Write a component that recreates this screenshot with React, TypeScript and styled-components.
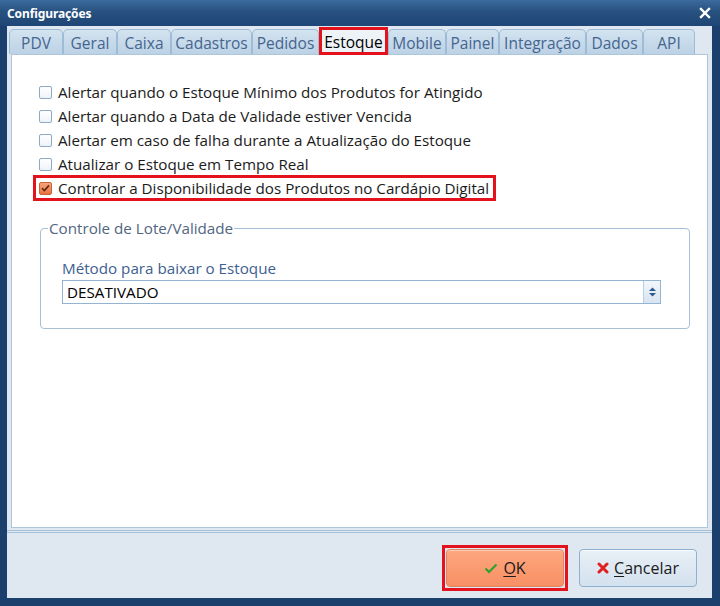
import React from 'react';
import styled, { createGlobalStyle, css } from 'styled-components';

const Global = createGlobalStyle`
  html, body { margin: 0; padding: 0; background: #1c406d; }
  body { font-family: "Open Sans", "Noto Sans", sans-serif; }
  * { box-sizing: border-box; }
`;

const RED = '#e3121c';

const Frame = styled.div`
  width: 720px;
  height: 606px;
  background: #1c406d;
  display: flex;
  flex-direction: column;
`;

const TitleBar = styled.div`
  height: 26px;
  flex: none;
  display: flex;
  align-items: center;
  justify-content: space-between;
  padding: 0 9px 0 7px;
  background: linear-gradient(to bottom, #3b6a9e 0%, #27517f 45%, #1f4676 100%);
  color: #fff;
  font-family: "Noto Sans", "Open Sans", sans-serif;
  font-weight: 700;
  font-size: 12px;
`;

const Title = styled.span`
  letter-spacing: -0.1px;
`;

const CloseBtn = styled.span`
  display: flex;
  width: 12px;
  height: 12px;
`;

const Client = styled.div`
  flex: 1;
  margin: 0 8px 8px 7px;
  background: #dfe8f1;
  display: flex;
  flex-direction: column;
`;

const TabRow = styled.div`
  height: 28px;
  flex: none;
  display: flex;
  align-items: flex-end;
  padding-left: 2px;
  position: relative;
  z-index: 1;
`;

const Tab = styled.div<{ $w: number; $active?: boolean }>`
  width: ${(p) => p.$w}px;
  height: 25px;
  display: flex;
  align-items: center;
  justify-content: center;
  padding-top: 1px;
  font-size: 15.5px;
  color: #45658f;
  border: 1px solid #9fbcd6;
  border-bottom: none;
  border-radius: 5px 5px 0 0;
  background: linear-gradient(to bottom, #d3e3f0 0%, #bcd2e5 100%);
  ${(p) =>
    p.$active &&
    css`
      height: 28px;
      margin-bottom: -1px;
      border: 3px solid ${RED};
      border-radius: 0;
      background: #eef3f8;
      color: #000;
    `}
`;

const Panel = styled.div`
  flex: 1;
  margin: 0 4px;
  background: #fff;
  border: 1px solid #adc6dc;
  display: flex;
  flex-direction: column;
`;

const CheckList = styled.div`
  margin: 27px 0 0 24px;
  display: flex;
  flex-direction: column;
  gap: 4px;
`;

const Row = styled.label<{ $hl?: boolean }>`
  width: fit-content;
  height: 20px;
  display: flex;
  align-items: center;
  gap: 6px;
  padding: 0 4px 0 3px;
  font-size: 15.2px;
  color: #1b1b1b;
  ${(p) =>
    p.$hl &&
    css`
      outline: 3px solid ${RED};
    `}
`;

const Box = styled.span<{ $checked?: boolean }>`
  width: 13px;
  height: 13px;
  flex: none;
  border: 1px solid #8ea9c3;
  border-radius: 2px;
  background: linear-gradient(to bottom, #ffffff, #eef3f8);
  display: flex;
  align-items: center;
  justify-content: center;
  ${(p) =>
    p.$checked &&
    css`
      border-color: #c2663c;
      background: linear-gradient(to bottom, #f7a57c 0%, #e9723e 100%);
    `}
`;

const Group = styled.fieldset`
  margin: 20px 17px 0 28px;
  padding: 0;
  border: 1px solid #a7c0d7;
  border-radius: 4px;
  min-width: 0;
`;

const Legend = styled.legend`
  margin-left: 7px;
  padding: 0 1px;
  font-size: 15.2px;
  line-height: 20px;
  color: #52667f;
`;

const GroupBody = styled.div`
  padding: 20px 28px 24px 21px;
  display: flex;
  flex-direction: column;
  gap: 2px;
`;

const FieldLabel = styled.div`
  font-size: 15.2px;
  line-height: 20px;
  color: #3d6090;
`;

const Select = styled.div`
  height: 24px;
  display: flex;
  border: 1px solid #93b4d3;
  background: #fff;
`;

const SelectText = styled.div`
  flex: 1;
  display: flex;
  align-items: center;
  padding-left: 4px;
  font-size: 15.2px;
  color: #000;
`;

const Spin = styled.div`
  width: 17px;
  flex: none;
  border-left: 1px solid #b9cfe3;
  background: linear-gradient(to bottom, #f3f7fb, #d7e4f0);
  display: flex;
  align-items: center;
  justify-content: center;
`;

const Footer = styled.div`
  height: 68px;
  flex: none;
  margin-top: 2px;
  border-top: 3px double #a8c2da;
  display: flex;
  justify-content: flex-end;
  align-items: flex-start;
  gap: 15px;
  padding: 16px 15px 0 0;
`;

const Button = styled.button<{ $primary?: boolean; $hl?: boolean }>`
  position: relative;
  width: 118px;
  height: 38px;
  display: flex;
  align-items: center;
  justify-content: center;
  gap: 5px;
  font-family: "Open Sans", "Noto Sans", sans-serif;
  font-size: 16px;
  color: #1a1a1a;
  border-radius: 4px;
  padding: 0;
  border: 1px solid #8fb0cf;
  background: linear-gradient(to bottom, #e9f0f7 0%, #d3e1ee 100%);
  box-shadow: inset 0 1px 0 rgba(255, 255, 255, 0.7);
  ${(p) =>
    p.$primary &&
    css`
      border-color: #d8876a;
      background: linear-gradient(to bottom, #fda780 0%, #f88f63 100%);
      box-shadow: inset 0 1px 0 rgba(255, 220, 200, 0.7);
    `}
  ${(p) =>
    p.$hl &&
    css`
      &::after {
        content: '';
        position: absolute;
        inset: -5px;
        border: 3px solid ${RED};
        pointer-events: none;
      }
    `}
`;

const U = styled.span`
  text-decoration: underline;
  text-underline-offset: 2px;
`;

const tabs: { label: string; w: number; active?: boolean }[] = [
  { label: 'PDV', w: 54 },
  { label: 'Geral', w: 54 },
  { label: 'Caixa', w: 54 },
  { label: 'Cadastros', w: 81 },
  { label: 'Pedidos', w: 67 },
  { label: 'Estoque', w: 69, active: true },
  { label: 'Mobile', w: 58 },
  { label: 'Painel', w: 53 },
  { label: 'Integração', w: 87 },
  { label: 'Dados', w: 57 },
  { label: 'API', w: 52 },
];

const options: { label: string; checked?: boolean }[] = [
  { label: 'Alertar quando o Estoque Mínimo dos Produtos for Atingido' },
  { label: 'Alertar quando a Data de Validade estiver Vencida' },
  { label: 'Alertar em caso de falha durante a Atualização do Estoque' },
  { label: 'Atualizar o Estoque em Tempo Real' },
  { label: 'Controlar a Disponibilidade dos Produtos no Cardápio Digital', checked: true },
];

export default function App() {
  return (
    <>
      <Global />
      <Frame>
        <TitleBar>
          <Title>Configurações</Title>
          <CloseBtn>
            <svg width="12" height="12" viewBox="0 0 12 12">
              <path d="M2 2 L10 10 M10 2 L2 10" stroke="#fff" strokeWidth="2.4" strokeLinecap="square" />
            </svg>
          </CloseBtn>
        </TitleBar>
        <Client>
          <TabRow>
            {tabs.map((t) => (
              <Tab key={t.label} $w={t.w} $active={t.active}>
                {t.label}
              </Tab>
            ))}
          </TabRow>
          <Panel>
            <CheckList>
              {options.map((o) => (
                <Row key={o.label} $hl={o.checked}>
                  <Box $checked={o.checked}>
                    {o.checked && (
                      <svg width="9" height="8" viewBox="0 0 9 8">
                        <path d="M1 4.2 L3.4 6.6 L8 1.4" fill="none" stroke="#5a2a14" strokeWidth="1.6" />
                      </svg>
                    )}
                  </Box>
                  {o.label}
                </Row>
              ))}
            </CheckList>
            <Group>
              <Legend>Controle de Lote/Validade</Legend>
              <GroupBody>
                <FieldLabel>Método para baixar o Estoque</FieldLabel>
                <Select>
                  <SelectText>DESATIVADO</SelectText>
                  <Spin>
                    <svg width="9" height="12" viewBox="0 0 9 12">
                      <path d="M4.5 1.5 L8 5 L1 5 Z" fill="#2f5a8c" />
                      <path d="M4.5 10.5 L8 7 L1 7 Z" fill="#2f5a8c" />
                    </svg>
                  </Spin>
                </Select>
              </GroupBody>
            </Group>
          </Panel>
          <Footer>
            <Button $primary $hl>
              <svg width="14" height="11" viewBox="0 0 14 11">
                <path d="M1.5 5.5 L5 9 L12.5 1.5" fill="none" stroke="#2ea12e" strokeWidth="2.2" />
              </svg>
              <span>
                <U>O</U>K
              </span>
            </Button>
            <Button>
              <svg width="12" height="12" viewBox="0 0 12 12">
                <path d="M2 2 L10 10 M10 2 L2 10" stroke="#e0201e" strokeWidth="3" strokeLinecap="round" />
              </svg>
              <span>
                <U>C</U>ancelar
              </span>
            </Button>
          </Footer>
        </Client>
      </Frame>
    </>
  );
}
